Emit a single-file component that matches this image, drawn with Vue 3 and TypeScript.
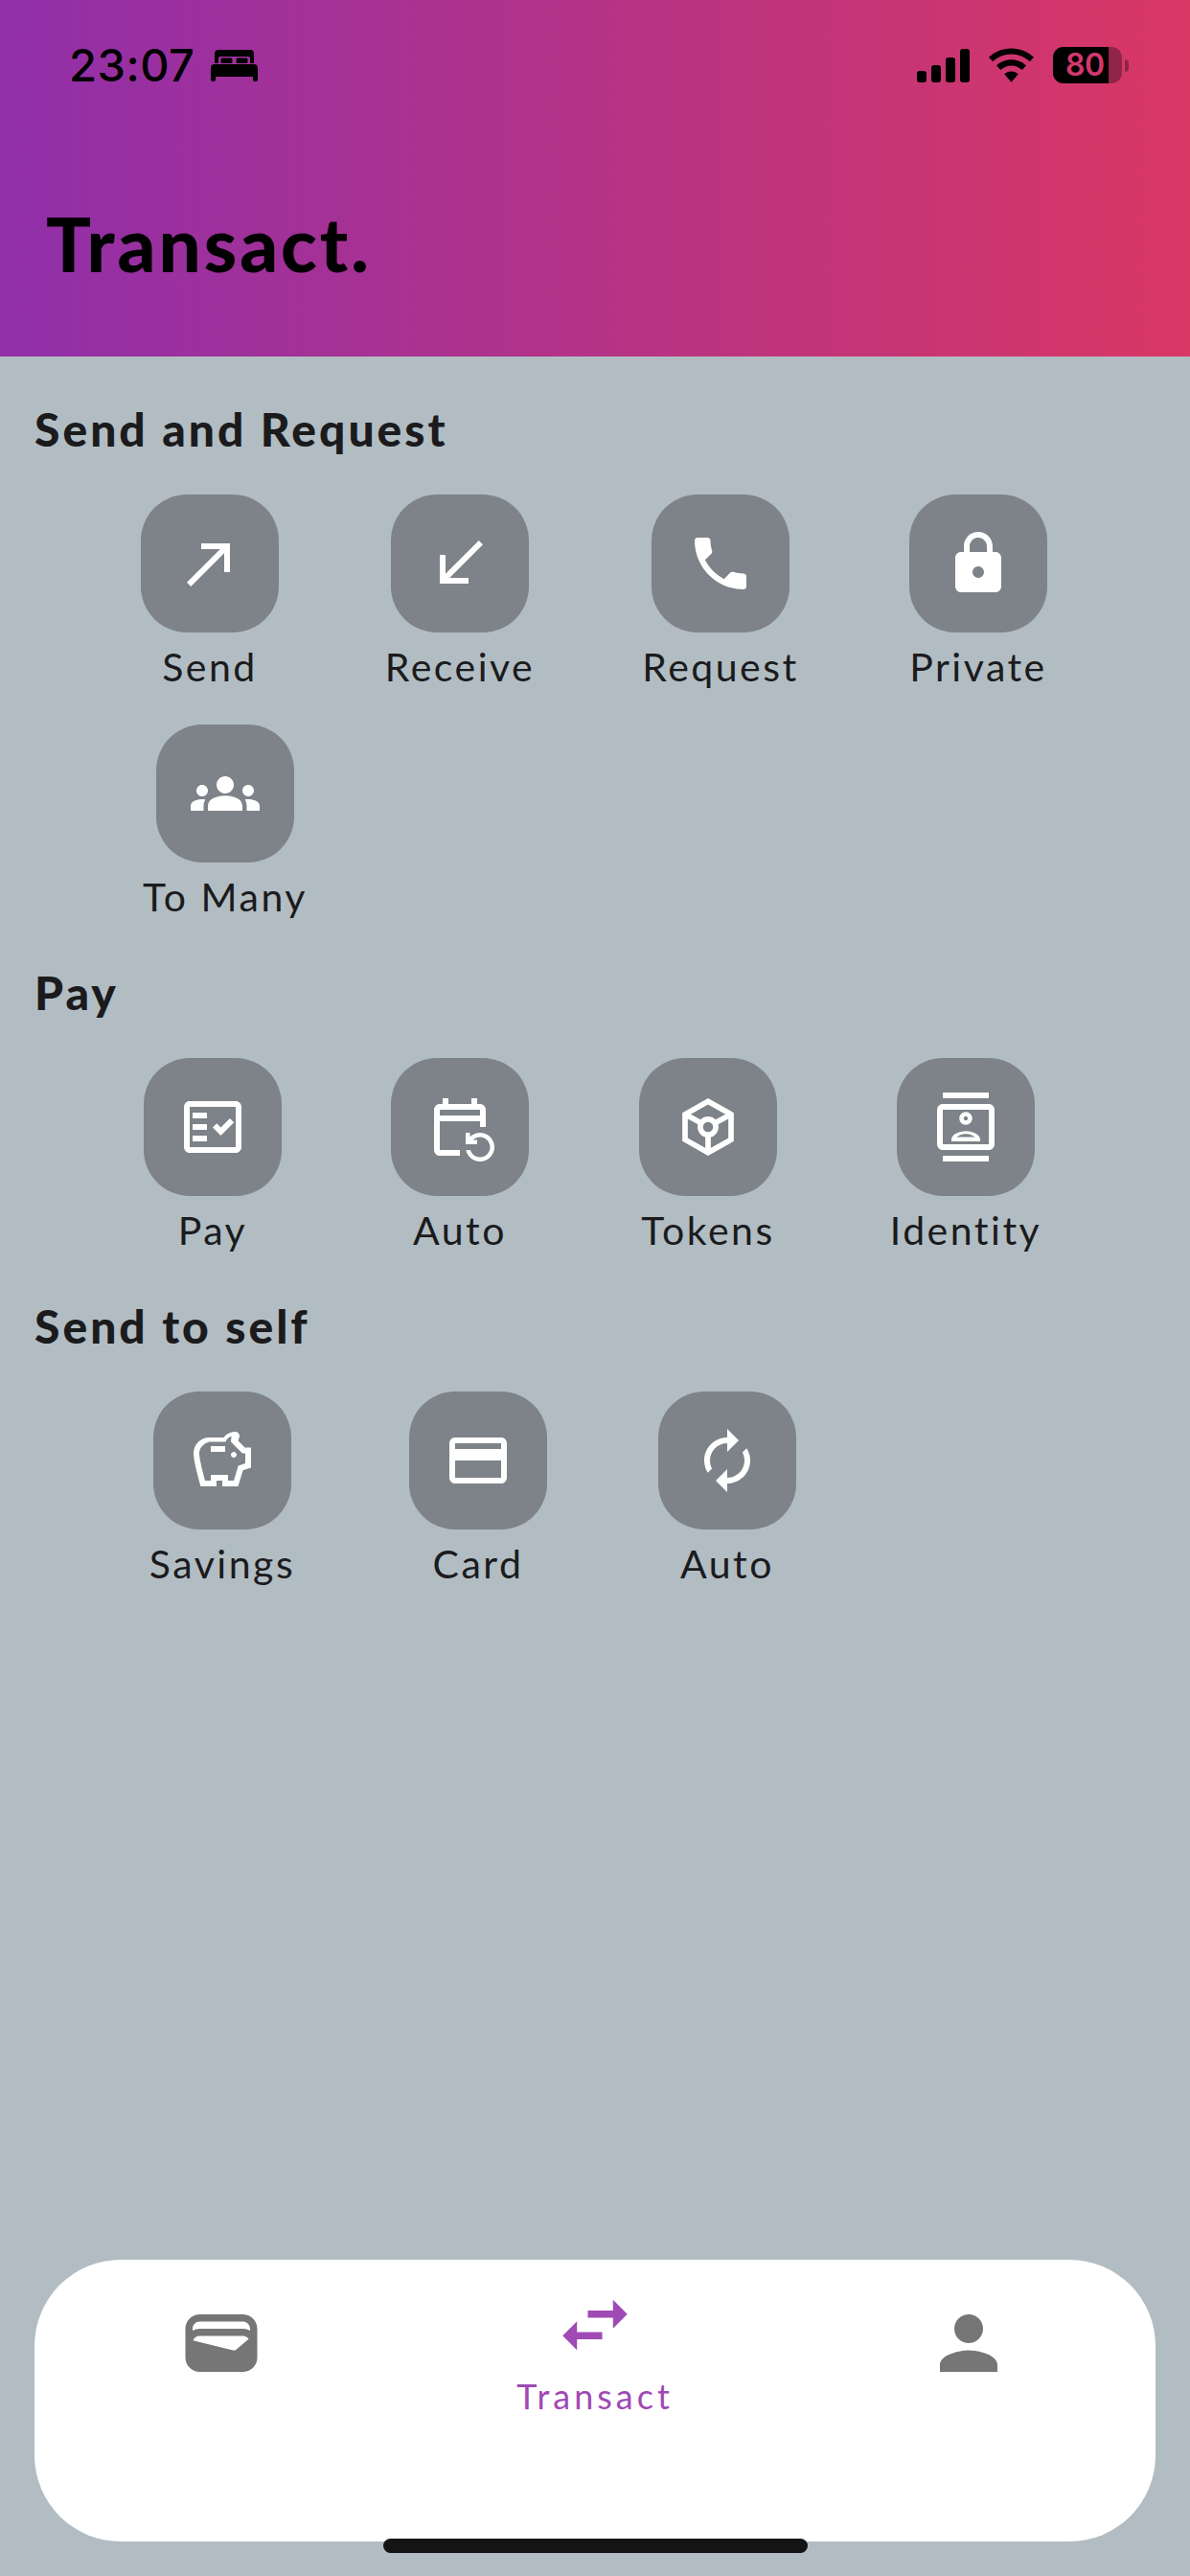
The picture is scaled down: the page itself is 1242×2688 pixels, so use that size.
<script setup lang="ts">
interface Action {
  label: string
  width: number
  paths: string[]
}

interface Section {
  title: string
  indent: number
  actions: Action[]
}

// material icon paths, 24 unit box
const icons = {
  send: ['M9 5v2h6.59L4 18.59 5.41 20 17 8.41V15h2V5H9z'],
  receive: ['M15 19v-2H8.41L20 5.41 18.59 4 7 15.59V9H5v10h10z'],
  request: ['M6.62 10.79c1.44 2.83 3.76 5.14 6.59 6.59l2.2-2.2c.27-.27.67-.36 1.02-.24 1.12.37 2.33.57 3.57.57.55 0 1 .45 1 1V20c0 .55-.45 1-1 1-9.39 0-17-7.61-17-17 0-.55.45-1 1-1h3.5c.55 0 1 .45 1 1 0 1.25.2 2.45.57 3.57.11.35.03.74-.25 1.02l-2.2 2.2z'],
  lock: ['M18 8h-1V6c0-2.76-2.24-5-5-5S7 3.24 7 6v2H6c-1.1 0-2 .9-2 2v10c0 1.1.9 2 2 2h12c1.1 0 2-.9 2-2V10c0-1.1-.9-2-2-2zm-6 9c-1.1 0-2-.9-2-2s.9-2 2-2 2 .9 2 2-.9 2-2 2zM9 8V6c0-1.66 1.34-3 3-3s3 1.34 3 3v2H9z'],
  groups: ['M12 12.75c1.63 0 3.07.39 4.24.9 1.08.48 1.76 1.56 1.76 2.73V18H6v-1.61c0-1.18.68-2.26 1.76-2.73 1.17-.52 2.61-.91 4.24-.91zM4 13c1.1 0 2-.9 2-2s-.9-2-2-2-2 .9-2 2 .9 2 2 2zm1.13 1.1c-.37-.06-.74-.1-1.13-.1-.99 0-1.93.21-2.78.58C.48 14.9 0 15.62 0 16.43V18h4.5v-1.61c0-.83.23-1.61.63-2.29zM20 13c1.1 0 2-.9 2-2s-.9-2-2-2-2 .9-2 2 .9 2 2 2zm4 3.43c0-.81-.48-1.53-1.22-1.85-.85-.37-1.79-.58-2.78-.58-.39 0-.76.04-1.13.1.4.68.63 1.46.63 2.29V18H24v-1.57zM12 6c1.66 0 3 1.34 3 3s-1.34 3-3 3-3-1.34-3-3 1.34-3 3-3z'],
  factCheck: [
    'M20 3H4c-1.1 0-2 .9-2 2v14c0 1.1.9 2 2 2h16c1.1 0 2-.9 2-2V5c0-1.1-.9-2-2-2zm0 16H4V5h16v14z',
    'M19.41 10.42 17.99 9l-3.17 3.17-1.41-1.42L12 12.16 14.82 15zM5 7h5v2H5zM5 11h5v2H5zM5 15h5v2H5z',
  ],
  eventRepeat: ['M21 12V6c0-1.1-.9-2-2-2h-1V2h-2v2H8V2H6v2H5c-1.1 0-2 .9-2 2v14c0 1.1.9 2 2 2h7v-2H5V10h14v2h2zm-2-4H5V6h14v2zm-3.36 12c.43 1.45 1.77 2.5 3.36 2.5 1.93 0 3.5-1.57 3.5-3.5s-1.57-3.5-3.5-3.5c-.95 0-1.82.38-2.45 1H18V18h-4v-4h1.5v1.43C16.4 14.55 17.64 14 19 14c2.76 0 5 2.24 5 5s-2.24 5-5 5c-2.42 0-4.44-1.72-4.9-4h1.54z'],
  contacts: ['M20 0H4v2h16V0zM4 24h16v-2H4v2zM20 4H4c-1.1 0-2 .9-2 2v12c0 1.1.9 2 2 2h16c1.1 0 2-.9 2-2V6c0-1.1-.9-2-2-2zm0 14H4V6h16v12zm-8-6.75c1.24 0 2.25-1.01 2.25-2.25S13.24 6.75 12 6.75 9.75 7.76 9.75 9s1.01 2.25 2.25 2.25zm0-3c.41 0 .75.34.75.75s-.34.75-.75.75-.75-.34-.75-.75.34-.75.75-.75zM17 16.4c0-2.08-3.31-2.98-5-2.98s-5 .9-5 2.98V17h10v-.6zm-8.19-.9c.61-.52 2.03-1.08 3.19-1.08s2.59.56 3.19 1.08H8.81z'],
  savings: ['M15 10c0-.55.45-1 1-1s1 .45 1 1-.45 1-1 1-1-.45-1-1zM8 9h5V7H8v2zm14-1.5v6.97l-2.82.94L17.5 21H12v-2h-2v2H4.5S2 12.54 2 9.5 4.46 4 7.5 4h5c.91-1.21 2.36-2 4-2 .83 0 1.5.67 1.5 1.5 0 .21-.04.4-.12.58-.14.32-.26.69-.32 1.09l2.27 2.33H22zm-2 2h-1l-4-4c0-.65.09-1.29.26-1.91-.97.25-1.76.97-2.09 1.91H7.5C5.57 6 4 7.57 4 9.5c0 1.88 1.22 6.65 2.01 9.5H8v-2h6v2h2.01l1.55-5.15 2.44-.82V9.5z'],
  card: ['M20 4H4c-1.11 0-1.99.89-1.99 2L2 18c0 1.11.89 2 2 2h16c1.11 0 2-.89 2-2V6c0-1.11-.89-2-2-2zm0 14H4v-6h16v6zm0-10H4V6h16v2z'],
  autorenew: ['M12 6v3l4-4-4-4v3c-4.42 0-8 3.58-8 8 0 1.57.46 3.03 1.24 4.26L6.7 14.8c-.45-.83-.7-1.79-.7-2.8 0-3.31 2.69-6 6-6zm6.76 1.74L17.3 9.2c.44.84.7 1.79.7 2.8 0 3.31-2.69 6-6 6v-3l-4 4 4 4v-3c4.42 0 8-3.58 8-8 0-1.57-.46-3.03-1.24-4.26z'],
}

const sections: Section[] = [
  {
    title: 'Send and Request',
    indent: 147,
    actions: [
      { label: 'Send', width: 144, paths: icons.send },
      { label: 'Receive', width: 150, paths: icons.receive },
      { label: 'Request', width: 166, paths: icons.request },
      { label: 'Private', width: 144, paths: icons.lock },
      { label: 'To Many', width: 176, paths: icons.groups },
    ],
  },
  {
    title: 'Pay',
    indent: 150,
    actions: [
      { label: 'Pay', width: 144, paths: icons.factCheck },
      { label: 'Auto', width: 144, paths: icons.eventRepeat },
      { label: 'Tokens', width: 146, paths: [] },
      { label: 'Identity', width: 164, paths: icons.contacts },
    ],
  },
  {
    title: 'Send to self',
    indent: 153,
    actions: [
      { label: 'Savings', width: 158, paths: icons.savings },
      { label: 'Card', width: 148, paths: icons.card },
      { label: 'Auto', width: 144, paths: icons.autorenew },
    ],
  },
]
</script>

<template>
  <div class="screen">
    <header class="top">
      <div class="status">
        <div class="status__left">
          <span class="status__time">23:07</span>
          <svg class="bed" viewBox="0 0 49 33">
            <path d="M8 0h33a4 4 0 0 1 4 4v10h-4V9a2 2 0 0 0-2-2H10a2 2 0 0 0-2 2v5H4V4a4 4 0 0 1 4-4z" />
            <rect x="10.5" y="8.5" width="12" height="5.5" rx="1.5" />
            <rect x="26.5" y="8.5" width="12" height="5.5" rx="1.5" />
            <path d="M4 15h41a4 4 0 0 1 4 4v12a2 2 0 0 1-2 2h-1a2 2 0 0 1-2-2v-3H5v3a2 2 0 0 1-2 2H2a2 2 0 0 1-2-2V19a4 4 0 0 1 4-4z" />
          </svg>
        </div>
        <div class="status__right">
          <div class="signal">
            <span class="signal__bar signal__bar--1"></span>
            <span class="signal__bar signal__bar--2"></span>
            <span class="signal__bar signal__bar--3"></span>
            <span class="signal__bar signal__bar--4"></span>
          </div>
          <svg class="wifi" viewBox="0 0 48 36">
            <path d="M24 0c9.500 0 18.200 3.700 24 9.700l-4.300 4.500C38.500 9.100 31.600 6.200 24 6.200S9.500 9.100 4.300 14.200L0 9.700C5.800 3.700 14.500 0 24 0z" />
            <path d="M24 12.200c6.200 0 11.800 2.400 15.700 6.300l-4.300 4.500c-3-2.800-6.900-4.600-11.400-4.600s-8.400 1.800-11.400 4.600l-4.300-4.500c3.900-3.900 9.500-6.300 15.700-6.300z" />
            <path d="M24 24.600c3 0 5.600 1.100 7.500 2.900L24 36l-7.500-8.500c1.900-1.800 4.500-2.900 7.500-2.900z" />
          </svg>
          <div class="battery">
            <span class="battery__fill"></span>
            <span class="battery__text">80</span>
          </div>
          <span class="battery__cap"></span>
        </div>
      </div>
      <h1 class="title">Transact.</h1>
    </header>

    <main class="content">
      <section v-for="section in sections" :key="section.title" class="group">
        <h2 class="group__title">{{ section.title }}</h2>
        <div class="group__row" :style="{ paddingLeft: section.indent + 'px' }">
          <div
            v-for="action in section.actions"
            :key="action.label"
            class="action"
            :style="{ width: action.width + 'px' }"
          >
            <div class="action__tile">
              <svg class="action__icon" viewBox="0 0 24 24">
                <template v-if="action.label === 'Tokens'">
                  <g class="token">
                    <path d="M12 3.100 20 7.600v8.800l-8 4.500-8-4.500V7.600z" />
                    <circle cx="12" cy="12" r="2.700" />
                    <path d="M4 7.600 9.700 10.700M20 7.600l-5.700 3.100M12 14.700v6.200" />
                  </g>
                </template>
                <path v-for="d in action.paths" :key="d" :d="d" />
              </svg>
            </div>
            <span class="action__label">{{ action.label }}</span>
          </div>
        </div>
      </section>
    </main>

    <nav class="tabs">
      <div class="tab">
        <svg class="tab__icon" viewBox="0 0 24 24">
          <path d="M18 4H6C3.790 4 2 5.790 2 8v8c0 2.210 1.790 4 4 4h12c2.210 0 4-1.790 4-4V8c0-2.210-1.790-4-4-4zm-1.860 9.770c-.24.2-.57.28-.88.2L4.150 11.250C4.450 10.520 5.160 10 6 10h12c.67 0 1.260.34 1.630.84l-3.490 2.930zM6 6h12c1.100 0 2 .9 2 2v.55c-.59-.34-1.270-.55-2-.55H6c-.73 0-1.410.21-2 .55V8c0-1.100.9-2 2-2z" />
        </svg>
      </div>
      <div class="tab tab--active">
        <svg class="tab__icon" viewBox="0 0 24 24">
          <path d="M6.990 11 3 15l3.990 4v-3H14v-2H6.990v-3zM21 9l-3.990-4v3H10v2h7.010v3L21 9z" />
        </svg>
        <span class="tab__label">Transact</span>
      </div>
      <div class="tab">
        <svg class="tab__icon" viewBox="0 0 24 24">
          <path d="M12 12c2.210 0 4-1.790 4-4s-1.790-4-4-4-4 1.790-4 4 1.790 4 4 4zm0 2c-2.670 0-8 1.340-8 4v2h16v-2c0-2.660-5.330-4-8-4z" />
        </svg>
      </div>
      <span class="home-bar"></span>
    </nav>
  </div>
</template>

<style>
html,
body {
  margin: 0;
  background: #b2bdc3;
}
</style>

<style scoped>
.screen {
  width: 1242px;
  height: 2688px;
  display: flex;
  flex-direction: column;
  overflow: hidden;
  background: #b2bdc3;
  color: #1b1b1d;
  font-family: Lato, 'Noto Sans', sans-serif;
}

.top {
  height: 372px;
  flex: none;
  box-sizing: border-box;
  background: linear-gradient(90deg, #902fa9, #d93764);
  color: #000;
}

.status {
  display: flex;
  justify-content: space-between;
  align-items: flex-start;
  padding: 44px 64px 0 72px;
}

.status__left {
  display: flex;
  align-items: center;
  gap: 17px;
  height: 48px;
}

.status__time {
  font-family: Inter, sans-serif;
  font-size: 47px;
  font-weight: 500;
  line-height: 48px;
  letter-spacing: 0.5px;
}

.bed {
  width: 49px;
  height: 33px;
  fill: #000;
}

.status__right {
  display: flex;
  align-items: center;
  height: 48px;
}

.signal {
  display: flex;
  align-items: flex-end;
  gap: 5px;
  height: 35px;
  margin-right: 20px;
}

.signal__bar {
  width: 10px;
  background: #000;
  border-radius: 3px;
}

.signal__bar--1 { height: 12px; }
.signal__bar--2 { height: 18px; }
.signal__bar--3 { height: 26px; }
.signal__bar--4 { height: 35px; }

.wifi {
  width: 47px;
  height: 36px;
  fill: #000;
  margin-right: 20px;
}

.battery {
  position: relative;
  width: 72px;
  height: 38px;
  border-radius: 11px;
  overflow: hidden;
  background: rgba(0, 0, 0, 0.32);
}

.battery__fill {
  position: absolute;
  left: 0;
  top: 0;
  bottom: 0;
  width: 58px;
  background: #000;
}

.battery__text {
  position: absolute;
  left: 13px;
  top: 0;
  font-family: Inter, sans-serif;
  font-size: 32px;
  font-weight: 600;
  line-height: 38px;
  letter-spacing: -0.5px;
  color: #d3386c;
}

.battery__cap {
  width: 4px;
  height: 13px;
  margin-left: 3px;
  border-radius: 0 4px 4px 0;
  background: rgba(0, 0, 0, 0.32);
}

.title {
  margin: 0;
  padding: 117px 0 0 48px;
  font-size: 78px;
  font-weight: 900;
  line-height: 90px;
  letter-spacing: 3px;
}

.content {
  flex: 1;
  padding-top: 36px;
}

.group__title {
  box-sizing: border-box;
  margin: 0;
  height: 108px;
  padding: 12px 0 0 36px;
  font-size: 48px;
  font-weight: 900;
  line-height: 56px;
  letter-spacing: 3px;
}

.group__row {
  display: flex;
  flex-wrap: wrap;
  column-gap: 114px;
}

.action {
  height: 240px;
  display: flex;
  flex-direction: column;
  align-items: center;
}

.action__tile {
  width: 144px;
  height: 144px;
  flex: none;
  display: flex;
  align-items: center;
  justify-content: center;
  border-radius: 48px;
  background: #7d8388;
}

.action__icon {
  width: 72px;
  height: 72px;
  fill: #fff;
}

.token {
  fill: none;
  stroke: #fff;
  stroke-width: 1.900;
}

.action__label {
  margin-top: 12px;
  font-size: 41px;
  line-height: 48px;
  letter-spacing: 2.500px;
  white-space: nowrap;
}

.tabs {
  position: relative;
  flex: none;
  height: 294px;
  margin: 0 36px 36px;
  display: grid;
  grid-template-columns: repeat(3, 1fr);
  border-radius: 90px;
  background: #fff;
}

.tab {
  display: flex;
  flex-direction: column;
  align-items: center;
  padding-top: 42px;
}

.tab--active {
  padding-top: 23px;
}

.tab__icon {
  width: 90px;
  height: 90px;
  fill: #767676;
}

.tab--active .tab__icon {
  fill: #9f4ab5;
}

.tab__label {
  margin-top: 7px;
  font-size: 36px;
  line-height: 44px;
  letter-spacing: 4px;
  color: #9f4ab5;
}

.home-bar {
  position: absolute;
  left: 364px;
  bottom: -12px;
  width: 443px;
  height: 15px;
  border-radius: 8px;
  background: #141414;
}
</style>
